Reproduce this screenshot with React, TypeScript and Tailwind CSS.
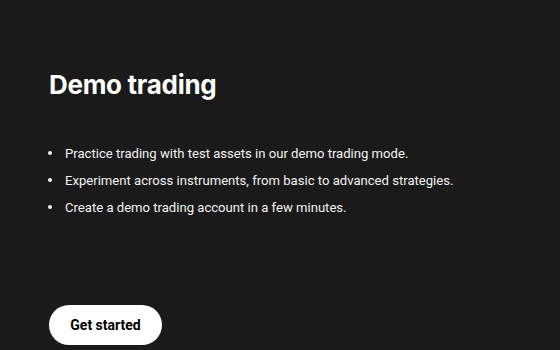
import React from "react";

export default function App() {
  const items = [
    "Practice trading with test assets in our demo trading mode.",
    "Experiment across instruments, from basic to advanced strategies.",
    "Create a demo trading account in a few minutes.",
  ];
  return (
    <div
      className="w-[560px] h-[350px] bg-[#1a1a1a] text-white overflow-hidden pl-[49px] pt-[68px]"
      style={{ fontFamily: "Roboto, Inter, sans-serif" }}
    >
      <h1
        className="text-[26px] leading-[34px] font-bold tracking-[-0.3px]"
        style={{ fontFamily: "Inter, sans-serif" }}
      >
        Demo trading
      </h1>
      <ul className="mt-[43px] flex flex-col gap-[9px]">
        {items.map((t) => (
          <li key={t} className="flex items-center text-[13.1px] leading-[18px] text-[#f2f2f2]">
            <span className="w-[16px] shrink-0 flex">
              <span className="ml-[-1px] mt-[-2px] w-[4px] h-[4px] rounded-full bg-[#f2f2f2]" />
            </span>
            <span>{t}</span>
          </li>
        ))}
      </ul>
      <button className="mt-[88px] h-[40px] w-[113px] rounded-full bg-white text-black text-[14px] font-bold">
        Get started
      </button>
    </div>
  );
}
